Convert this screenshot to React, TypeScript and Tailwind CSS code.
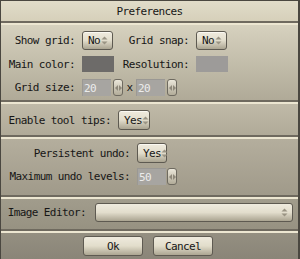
import React from "react";

const font = "font-['DejaVu_Sans_Mono',monospace] text-[11px] tracking-[-0.6px] leading-none text-[#161616]";

function UpDown() {
  return (
    <svg width="7" height="9" viewBox="0 0 7 9" className="shrink-0">
      <path d="M3.5 0.5 L6.5 3.5 H0.5 Z" fill="#9a9484" />
      <path d="M3.5 8.5 L6.5 5.5 H0.5 Z" fill="#9a9484" />
    </svg>
  );
}

function LeftRight() {
  return (
    <svg width="7" height="6" viewBox="0 0 7 6">
      <path d="M0 3 L3 0 V6 Z" fill="#8e887a" />
      <path d="M7 3 L4 0 V6 Z" fill="#8e887a" />
    </svg>
  );
}

function Select({ value, w }: { value: string; w: string }) {
  return (
    <div className={`${w} ml-[7px] h-full flex items-center justify-between pl-[5px] pr-[4px] rounded-[3px] border border-[#5e5a51] bg-gradient-to-b from-[#efebde] via-[#e2ddcc] to-[#aaa491] shadow-[inset_0_1px_0_#fbf9f2]`}>
      <span>{value}</span>
      <UpDown />
    </div>
  );
}

function Spin() {
  return (
    <div className="w-[10px] h-[17px] flex items-center justify-center rounded-[3px] border border-[#6e6a60] bg-gradient-to-b from-[#ebe7da] to-[#b2ac99]">
      <LeftRight />
    </div>
  );
}

function Field({ value }: { value: string }) {
  return (
    <div className="w-[29px] h-full flex items-center pl-[1px] bg-[#a7a5a1] border-t border-l border-[#9a9894] text-[#ececec]">
      {value}
    </div>
  );
}

function Sep() {
  return (
    <div className="shrink-0">
      <div className="h-[2px] bg-[#6f6a5f]" />
      <div className="h-[2px] bg-[#ece6d1]" />
    </div>
  );
}

function Button({ label }: { label: string }) {
  return (
    <div className="w-[60px] h-[20px] flex items-center justify-center rounded-[3px] border border-[#5e5a51] bg-gradient-to-b from-[#eeeadd] via-[#e2ddcb] to-[#aca692]">
      {label}
    </div>
  );
}

export default function App() {
  return (
    <div className={`w-[300px] h-[259px] flex flex-col overflow-hidden border-t border-l border-r-2 border-[#4a4740] bg-[#8f8a7d] ${font}`}>
      <div className="h-[20px] shrink-0 flex items-center justify-center bg-gradient-to-b from-[#e1dcc9] to-[#d6d0ba]">
        Preferences
      </div>
      <Sep />

      <div className="h-[75px] shrink-0 pt-[6px] bg-gradient-to-b from-[#d6d1be] to-[#b0aa98]">
        <div className="h-[19px] flex items-center">
          <span className="w-[74px] text-right">Show grid:</span>
          <Select value="No" w="w-[31px]" />
          <span className="w-[76px] text-right">Grid snap:</span>
          <Select value="No" w="w-[31px]" />
        </div>
        <div className="h-[16px] mt-[6px] flex items-center">
          <span className="w-[74px] text-right">Main color:</span>
          <div className="ml-[7px] w-[32px] h-full bg-[#6d6b69]" />
          <span className="w-[75px] text-right">Resolution:</span>
          <div className="ml-[7px] w-[32px] h-full bg-[#9d9b99]" />
        </div>
        <div className="h-[17px] mt-[7px] flex items-center">
          <span className="w-[74px] text-right">Grid size:</span>
          <div className="ml-[7px] h-full flex items-center gap-[2px]">
            <Field value="20" />
            <Spin />
          </div>
          <span className="w-[13px] text-center">x</span>
          <div className="h-full flex items-center gap-[2px]">
            <Field value="20" />
            <Spin />
          </div>
        </div>
      </div>
      <Sep />

      <div className="h-[31px] shrink-0 pt-[6px] bg-gradient-to-b from-[#c0baa8] to-[#b0aa98]">
        <div className="h-[20px] flex items-center">
          <span className="w-[110px] text-right">Enable tool tips:</span>
          <Select value="Yes" w="w-[32px]" />
        </div>
      </div>
      <Sep />

      <div className="h-[56px] shrink-0 pt-[4px] bg-gradient-to-b from-[#b4ae9d] to-[#a09a8a]">
        <div className="h-[20px] flex items-center">
          <span className="w-[129px] text-right">Persistent undo:</span>
          <Select value="Yes" w="w-[30px]" />
        </div>
        <div className="h-[17px] mt-[5px] flex items-center">
          <span className="w-[129px] text-right">Maximum undo levels:</span>
          <div className="ml-[7px] h-full flex items-center gap-[1px]">
            <Field value="50" />
            <Spin />
          </div>
        </div>
      </div>
      <Sep />

      <div className="h-[30px] shrink-0 pt-[4px] bg-gradient-to-b from-[#a19c8c] to-[#979282]">
        <div className="h-[19px] flex items-center">
          <span className="w-[85px] text-right">Image Editor:</span>
          <div className="ml-[9px] w-[198px] h-full flex items-center justify-end pr-[4px] rounded-[3px] border border-[#5e5a51] bg-gradient-to-b from-[#efebde] via-[#e2ddcc] to-[#aaa491]">
            <UpDown />
          </div>
        </div>
      </div>
      <Sep />

      <div className="flex-1 pt-[3px] flex gap-[10px] pl-[82px] bg-gradient-to-b from-[#948f81] to-[#8a8578]">
        <Button label="Ok" />
        <Button label="Cancel" />
      </div>
    </div>
  );
}
